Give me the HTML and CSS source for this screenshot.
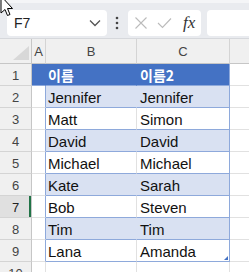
FILE: index.html
```html
<!DOCTYPE html>
<html lang="ko">
<head>
  <meta charset="UTF-8">
  <meta name="viewport" content="width=device-width, initial-scale=1.0">
  <title>Sheet</title>
  <link rel="stylesheet" href="styles.css">
</head>
<body>

  <div class="app">
    <svg class="cursor" width="14" height="18" viewBox="0 0 14 18">
      <path d="M1 -4 L1 13 L5 9.5 L7.5 15.5 L10 14.5 L7.5 8.5 L12.5 8.5 Z" fill="#fff" stroke="#000" stroke-width="1"/>
    </svg>

    <div class="toolbar">
      <div class="namebox">
        <span class="ref">F7</span>
        <svg class="chevron" width="12" height="8" viewBox="0 0 12 8">
          <path d="M1 1.5 L6 6.5 L11 1.5" fill="none" stroke="#555" stroke-width="1.3"/>
        </svg>
      </div>
      <svg class="dots" width="4" height="14" viewBox="0 0 4 14">
        <circle cx="2" cy="2" r="1.3" fill="#444"/>
        <circle cx="2" cy="7" r="1.3" fill="#444"/>
        <circle cx="2" cy="12" r="1.3" fill="#444"/>
      </svg>
      <div class="fxbox">
        <svg width="14" height="14" viewBox="0 0 14 14">
          <path d="M1.5 1.5 L12.5 12.5 M12.5 1.5 L1.5 12.5" stroke="#bbb" stroke-width="1.1"/>
        </svg>
        <svg width="15" height="12" viewBox="0 0 15 12">
          <path d="M1 6 L5.5 10.5 L14 1.5" fill="none" stroke="#bbb" stroke-width="1.1"/>
        </svg>
        <span class="fx">fx</span>
      </div>
      <div class="formula"></div>
    </div>

    <div class="sheet">
      <div class="corner">
        <svg width="16" height="14" viewBox="0 0 16 14"><path d="M16 0 L16 14 L0 14 Z" fill="#d8d8d8"/></svg>
      </div>
      <div class="colhead">A</div>
      <div class="colhead">B</div>
      <div class="colhead">C</div>
      <div class="colhead last"></div>

      <div class="rowhead">1</div>
      <div class="cell a head"></div>
      <div class="cell b head">이름</div>
      <div class="cell c head">이름2</div>
      <div class="cell d"></div>

      <div class="rowhead">2</div>
      <div class="cell a tab"></div>
      <div class="cell b band">Jennifer</div>
      <div class="cell c band">Jennifer</div>
      <div class="cell d"></div>

      <div class="rowhead">3</div>
      <div class="cell a tab"></div>
      <div class="cell b plain">Matt</div>
      <div class="cell c plain">Simon</div>
      <div class="cell d"></div>

      <div class="rowhead">4</div>
      <div class="cell a tab"></div>
      <div class="cell b band">David</div>
      <div class="cell c band">David</div>
      <div class="cell d"></div>

      <div class="rowhead">5</div>
      <div class="cell a tab"></div>
      <div class="cell b plain">Michael</div>
      <div class="cell c plain">Michael</div>
      <div class="cell d"></div>

      <div class="rowhead">6</div>
      <div class="cell a tab"></div>
      <div class="cell b band">Kate</div>
      <div class="cell c band">Sarah</div>
      <div class="cell d"></div>

      <div class="rowhead selected">7</div>
      <div class="cell a tab"></div>
      <div class="cell b plain">Bob</div>
      <div class="cell c plain">Steven</div>
      <div class="cell d"></div>

      <div class="rowhead">8</div>
      <div class="cell a tab"></div>
      <div class="cell b band">Tim</div>
      <div class="cell c band">Tim</div>
      <div class="cell d"></div>

      <div class="rowhead">9</div>
      <div class="cell a tab"></div>
      <div class="cell b plain">Lana</div>
      <div class="cell c plain resize">Amanda</div>
      <div class="cell d"></div>

      <div class="rowhead">10</div>
      <div class="cell a"></div>
      <div class="cell b"></div>
      <div class="cell c"></div>
      <div class="cell d"></div>
    </div>
  </div>

</body>
</html>
```

FILE: styles.css
```css
body {
  margin: 0;
  font-family: "Liberation Sans", "Noto Sans CJK KR", sans-serif;
  background-color: #fff;
  overflow: hidden;
}

.app {
  position: relative;
  width: 249px;
  height: 272px;
  overflow: hidden;
}

.cursor {
  position: absolute;
  left: 0;
  top: 0;
  z-index: 5;
}

.toolbar {
  height: 39px;
  box-sizing: border-box;
  background-color: #e9ebef;
  border-top: 3px solid #f4f5f7;
  border-bottom: 1px solid #d6d8dc;
  display: flex;
  align-items: center;
  padding: 4px 0 0 7px;
}

.namebox {
  width: 100px;
  height: 26px;
  box-sizing: border-box;
  background-color: #fff;
  border-radius: 4px;
  display: flex;
  align-items: center;
  justify-content: space-between;
  padding: 0 6px 0 7px;
}

.ref {
  font-size: 14px;
  color: #222;
}

.dots {
  margin: 0 9px 0 8px;
}

.fxbox {
  width: 73px;
  height: 26px;
  box-sizing: border-box;
  background-color: #fff;
  border-radius: 4px;
  display: flex;
  align-items: center;
  gap: 9px;
  padding: 0 0 0 6px;
}

.fx {
  font-family: "Liberation Serif", serif;
  font-style: italic;
  font-size: 17px;
  color: #333;
  margin-left: 2px;
}

.formula {
  flex: 1;
  height: 26px;
  margin-left: 6px;
  background-color: #fff;
  border-radius: 4px 0 0 4px;
}

.sheet {
  display: grid;
  grid-template-columns: 32px 14px 91px 93px 1fr;
  grid-template-rows: 25px repeat(10, 22px);
}

.corner,
.colhead,
.rowhead {
  background-color: #f0f0f0;
  color: #444;
  font-size: 13px;
  box-sizing: border-box;
  border-right: 1px solid #d4d4d4;
  border-bottom: 1px solid #d4d4d4;
  display: flex;
  align-items: center;
  justify-content: center;
}

.corner {
  justify-content: flex-end;
  align-items: flex-end;
  padding: 0 2px 3px 0;
  border-right-color: #c6c6c6;
  border-bottom-color: #c6c6c6;
}

.colhead {
  border-bottom-color: #c6c6c6;
}

.colhead.last {
  border-right: none;
}

.rowhead {
  border-right-color: #c6c6c6;
  padding-top: 1px;
}

.rowhead.selected {
  background-color: #e0e0e0;
  color: #222;
  box-shadow: inset -2px 0 0 #217346;
}

.cell {
  box-sizing: border-box;
  border-right: 1px solid #e1e1e1;
  border-bottom: 1px solid #e1e1e1;
  font-size: 15px;
  color: #111;
  display: flex;
  align-items: center;
  padding: 1px 0 0 2px;
}

.cell.a.head {
  border-right-color: #4472c4;
}

.cell.a.tab {
  border-right-color: #8ea9db;
}

.cell.head {
  background-color: #4472c4;
  color: #fff;
  font-weight: bold;
  border-bottom-color: #8ea9db;
  border-right-color: #4472c4;
  font-family: "Noto Sans CJK KR", sans-serif;
  font-size: 14px;
}

.cell.band {
  background-color: #d9e1f2;
  border-bottom-color: #8ea9db;
  border-right-color: #d9e1f2;
}

.cell.plain {
  background-color: #fff;
  border-bottom-color: #8ea9db;
}

.cell.c.head,
.cell.c.band,
.cell.c.plain {
  border-right-color: #8ea9db;
}

.cell.b.head,
.cell.b.band,
.cell.b.plain,
.cell.c.head,
.cell.c.band,
.cell.c.plain {
  padding-left: 2px;
}

.cell.c.head,
.cell.c.band,
.cell.c.plain {
  padding-left: 3px;
}

.cell.d {
  border-right: none;
}

.resize {
  position: relative;
}

.resize::after {
  content: "";
  position: absolute;
  right: 1px;
  bottom: 1px;
  width: 0;
  height: 0;
  border-left: 4px solid transparent;
  border-bottom: 4px solid #4472c4;
}
```
